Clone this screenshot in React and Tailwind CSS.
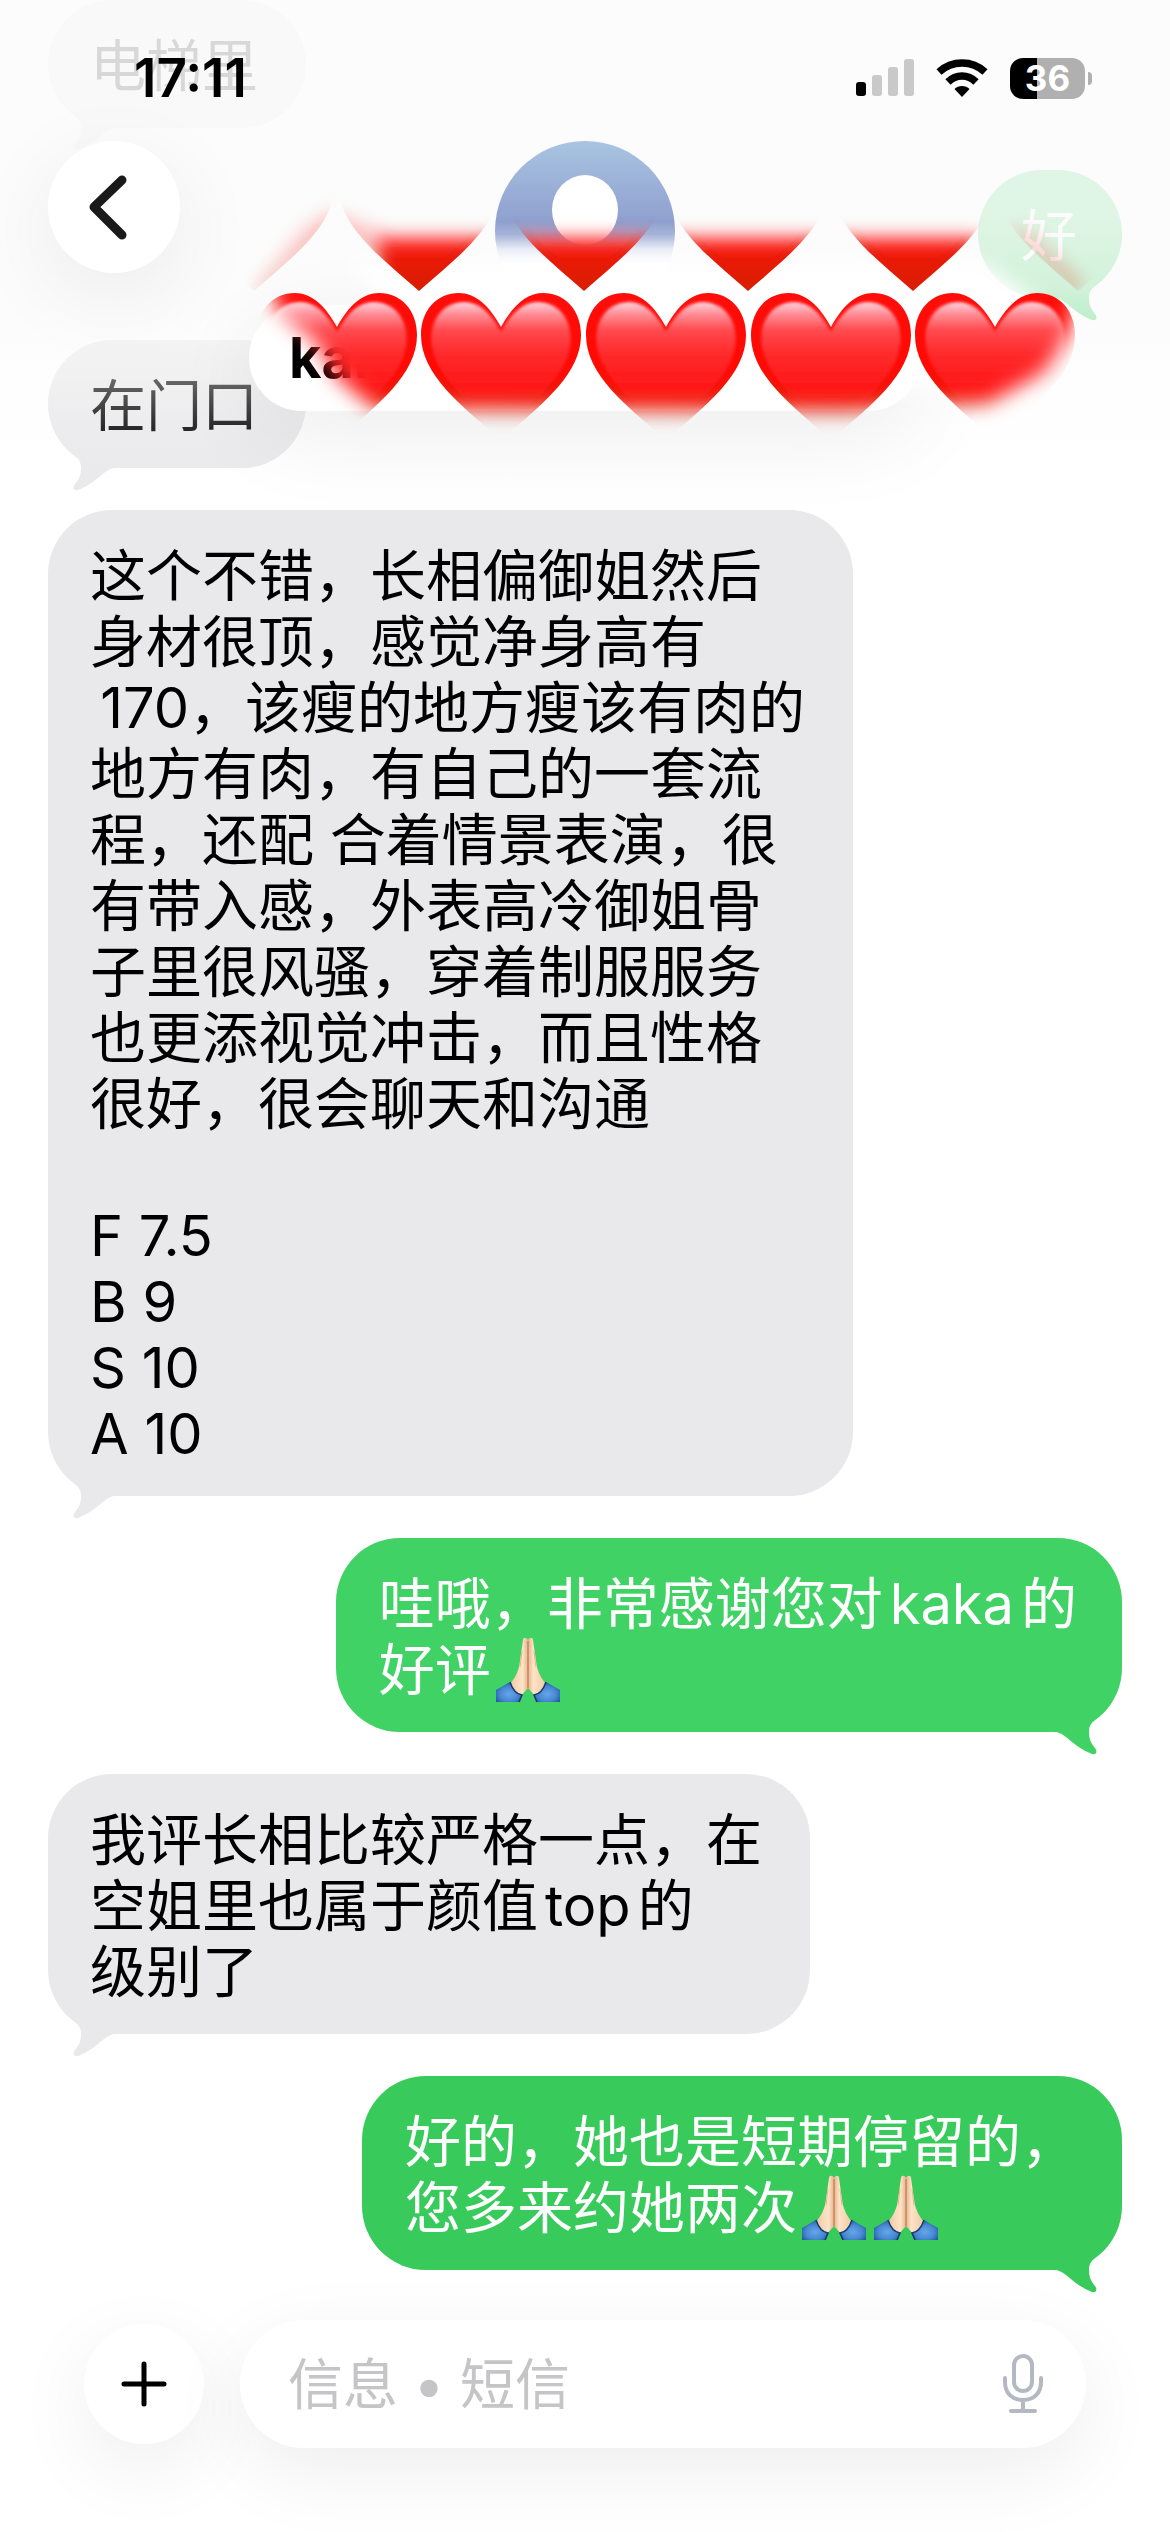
import React, { useState } from 'react';

const HEART_PATH =
  'M0 34 C-12 12 -26 0 -42 0 C-64 0 -80 17 -80 42 C-80 82 -40 112 0 147 C40 112 80 82 80 42 C80 17 64 0 42 0 C26 0 12 12 0 34 Z';

const messages = [
  { id: 1, from: 'them', lines: ['电梯里'] },
  { id: 2, from: 'me', tone: 'bg-[#41d366] text-[#41d366]', lines: ['好'] },
  { id: 3, from: 'them', lines: ['在门口'] },
  {
    id: 4,
    from: 'them',
    lines: [
      '这个不错，长相偏御姐然后',
      '身材很顶，感觉净身高有',
      '\u2009170，该瘦的地方瘦该有肉的',
      '地方有肉，有自己的一套流',
      '程，还配 合着情景表演，很',
      '有带入感，外表高冷御姐骨',
      '子里很风骚，穿着制服服务',
      '也更添视觉冲击，而且性格',
      '很好，很会聊天和沟通',
      '',
      'F 7.5',
      'B 9',
      'S 10',
      'A 10',
    ],
  },
  {
    id: 5,
    from: 'me',
    tone: 'bg-[#40d265] text-[#40d265]',
    lines: ['哇哦，非常感谢您对kaka的', '好评'],
    prayers: 1,
  },
  {
    id: 6,
    from: 'them',
    lines: ['我评长相比较严格一点，在', '空姐里也属于颜值top的', '级别了'],
  },
  {
    id: 7,
    from: 'me',
    tone: 'bg-[#38cb5c] text-[#38cb5c]',
    lines: ['好的，她也是短期停留的，', '您多来约她两次'],
    prayers: 2,
  },
];

const PrayEmoji = () => (
  <svg role="img" aria-label="🙏🏻" viewBox="0 0 66 66" className="ml-1 mr-0.5 inline-block h-[66px] w-[66px] align-top">
    <defs>
      <linearGradient id="skin" x1="0" x2="1" y1="0" y2="0">
        <stop offset="0" stopColor="#f3c9a0" />
        <stop offset="0.35" stopColor="#fde3c8" />
        <stop offset="0.5" stopColor="#e8b48c" />
        <stop offset="0.65" stopColor="#fde3c8" />
        <stop offset="1" stopColor="#f3c9a0" />
      </linearGradient>
      <radialGradient id="sleeve" cx="0.5" cy="0.6" r="0.6">
        <stop offset="0" stopColor="#66a6ea" />
        <stop offset="0.6" stopColor="#4788d2" />
        <stop offset="1" stopColor="#235a9f" />
      </radialGradient>
    </defs>
    <path d="M33 3 C32 0 28 0 28 3 L25 24 C24 34 20 41 15 47 L16 55 L24 61 L33 51 L42 61 L50 55 L51 47 C46 41 42 34 41 24 L38 3 C38 0 34 0 33 3 Z" fill="url(#skin)" />
    <path d="M33 4 L33 51" stroke="#bb7b53" strokeWidth="1.2" />
    <path d="M27 14 L25 30 M39 14 L41 30" stroke="#e7b68d" strokeWidth="1" fill="none" />
    <path d="M1 53 L15 45 C17 51 20 57 27 58 L25 65 L1 65 Z" fill="url(#sleeve)" />
    <path d="M65 53 L51 45 C49 51 46 57 39 58 L41 65 L65 65 Z" fill="url(#sleeve)" />
    <path d="M15 45 C17 51 20 57 27 58 L24 65 M51 45 C49 51 46 57 39 58 L42 65" stroke="#143a70" strokeWidth="1.5" fill="none" />
  </svg>
);

const Tail = ({ mine }) => (
  <svg
    aria-hidden="true"
    viewBox="0 0 80 50"
    className={
      mine
        ? 'absolute -bottom-[24px] right-0 h-[50px] w-[80px] -scale-x-100'
        : 'absolute -bottom-[24px] left-0 h-[50px] w-[80px]'
    }
  >
    <path d="M16 4 C24 12 33 16 33 25 C33 34 31 37 27 42 C24 46 26 49 30 48 C40 44 48 38 56 31 C60 28 63 26 68 26 L76 26 L60 4 Z" fill="currentColor" />
  </svg>
);

const Bubble = ({ message }) => {
  const mine = message.from === 'me';
  return (
    <li
      className={`relative w-fit rounded-[64px] pb-[29px] pt-[33px] ${
        mine ? `self-end pl-[43px] pr-[45px] ${message.tone}` : 'self-start bg-[#e9e9eb] pl-[42px] pr-[48px] text-[#e9e9eb]'
      }`}
    >
      <Tail mine={mine} />
      <p className={`relative whitespace-pre text-[56px] leading-[66px] [text-autospace:normal] ${mine ? 'text-white' : 'text-black'}`}>
        {message.lines.join('\n')}
        {Array.from({ length: message.prayers || 0 }, (_, i) => (
          <PrayEmoji key={i} />
        ))}
      </p>
    </li>
  );
};

const StatusBar = () => (
  <div className="flex h-[141px] items-center justify-between pl-[134px] pr-[78px] pt-[15px]">
    <time className="text-[53px] font-semibold leading-[60px] text-black">17:11</time>
    <div className="flex items-center gap-[22px]">
      <svg aria-label="signal" viewBox="0 0 58 38" className="h-[38px] w-[58px]">
        <rect x="0" y="23" width="10" height="14" rx="3" fill="#000" />
        <rect x="16" y="16" width="10" height="21" rx="3" fill="#c9c9c9" />
        <rect x="32" y="8" width="10" height="29" rx="3" fill="#c9c9c9" />
        <rect x="48" y="0" width="10" height="37" rx="3" fill="#c9c9c9" />
      </svg>
      <svg aria-label="wifi" viewBox="0 0 52 38" className="h-[38px] w-[52px]">
        <path d="M3 13 C16 1 36 1 49 13" fill="none" stroke="#000" strokeWidth="7.5" />
        <path d="M12 23 C20 15 32 15 40 23" fill="none" stroke="#000" strokeWidth="7.5" />
        <path d="M26 38 L18.5 30 C22 26 30 26 33.5 30 Z" fill="#000" />
      </svg>
      <div className="flex items-center gap-[3px]">
        <div className="flex h-[41px] w-[75px] items-center justify-center rounded-[13px] bg-linear-to-r from-black from-36% to-[#b0b0b0] to-36% text-[35px] font-bold leading-[41px] text-white">
          36
        </div>
        <div className="h-[13px] w-[4px] rounded-r-full bg-[#b0b0b0]"></div>
      </div>
    </div>
  </div>
);

const Heart = ({ x, y }) => (
  <g transform={`translate(${x} ${y})`}>
    <path d={HEART_PATH} fill="url(#heartBody)" />
    <path d={HEART_PATH} fill="url(#heartShine)" transform="translate(0 9) scale(0.87)" filter="url(#soft)" />
  </g>
);

const HeartSticker = () => (
  <svg
    aria-hidden="true"
    viewBox="55 0 1060 460"
    className="pointer-events-none absolute left-1/2 top-0 h-[460px] w-[1060px] -translate-x-1/2"
  >
    <defs>
      <linearGradient id="heartBody" x1="0" x2="0" y1="0" y2="1">
        <stop offset="0" stopColor="#ff0d0a" />
        <stop offset="0.5" stopColor="#ff0a04" />
        <stop offset="0.7" stopColor="#f0180a" />
        <stop offset="1" stopColor="#d81e00" />
      </linearGradient>
      <linearGradient id="heartShine" x1="0" x2="0" y1="0" y2="1">
        <stop offset="0" stopColor="#ffd3de" />
        <stop offset="0.09" stopColor="#ff9098" />
        <stop offset="0.22" stopColor="#ff4a4e" />
        <stop offset="0.4" stopColor="#ff2a2c" />
        <stop offset="0.68" stopColor="#ff1616" stopOpacity="0.95" />
        <stop offset="0.85" stopColor="#f51a0c" stopOpacity="0" />
      </linearGradient>
      <filter id="soft" x="-10%" y="-10%" width="120%" height="120%">
        <feGaussianBlur stdDeviation="2" />
      </filter>
      <filter id="fade" x="-20%" y="-40%" width="140%" height="180%">
        <feGaussianBlur stdDeviation="10" />
      </filter>
      <filter id="edge" x="-20%" y="-40%" width="140%" height="180%">
        <feGaussianBlur stdDeviation="9" />
      </filter>
      <mask id="topRow" maskUnits="userSpaceOnUse" x="200" y="150" width="950" height="200">
        <path d="M378 238 H980 V320 H378 Z" fill="#fff" filter="url(#edge)" />
        <path d="M330 212 L385 232 L385 262 L340 245 L262 294 L252 292 L305 228 Z" fill="#fff" opacity="0.24" filter="url(#edge)" />
        <path d="M1010 230 L1024 230 L1082 282 L1082 294 L1068 290 Z" fill="#fff" opacity="0.28" filter="url(#edge)" />
      </mask>
      <mask id="bottomRow" maskUnits="userSpaceOnUse" x="200" y="270" width="950" height="180">
        <path d="M262 270 H1085 L1068 335 L1044 372 L988 403 L850 411 L375 409 L338 378 L314 340 L282 315 Z" fill="#fff" filter="url(#fade)" />
      </mask>
    </defs>
    <path d="M350 262 H980 L1035 300 L1050 380 L900 390 H430 L400 320 Z" fill="#fff" filter="url(#fade)" />
    <g mask="url(#topRow)">
      {[254, 419, 584, 748, 913, 1078].map((x) => (
        <Heart key={x} x={x} y={144} />
      ))}
    </g>
    <g mask="url(#bottomRow)">
      {[337, 501, 666, 831, 995].map((x) => (
        <Heart key={x} x={x} y={293} />
      ))}
    </g>
  </svg>
);

const ChatHeader = () => (
  <header className="absolute inset-x-0 top-0 z-10">
    <div className="absolute inset-x-0 top-0 h-[510px] bg-[linear-gradient(to_bottom,rgba(252,252,252,0.86)_0%,rgba(251,251,251,0.85)_42%,rgba(251,251,251,0.78)_56%,rgba(251,251,251,0.6)_67%,rgba(252,252,252,0.42)_74%,rgba(252,252,252,0.16)_84%,rgba(255,255,255,0)_100%)]"></div>
    <div className="relative">
      <StatusBar />
      <div className="grid grid-cols-[1fr_auto_1fr] items-start px-12">
        <button
          type="button"
          aria-label="返回"
          className="flex h-[132px] w-[132px] items-center justify-center rounded-full bg-white shadow-[0_24px_90px_rgba(0,0,0,0.07)]"
        >
          <svg viewBox="0 0 132 132" className="h-[132px] w-[132px]">
            <path d="M74 39 L46 66 L74 94" fill="none" stroke="#1a1a1a" strokeWidth="9" strokeLinecap="round" strokeLinejoin="round" />
          </svg>
        </button>
        <div className="flex w-[672px] flex-col items-center">
          <svg viewBox="0 0 180 180" aria-hidden="true" className="h-[180px] w-[180px]">
            <defs>
              <linearGradient id="avatar" x1="0" x2="0" y1="0" y2="1">
                <stop offset="0" stopColor="#a9c4e1" />
                <stop offset="0.45" stopColor="#8fa0cf" />
                <stop offset="0.52" stopColor="#a7b4d9" />
                <stop offset="0.6" stopColor="#e6eaf5" />
                <stop offset="0.68" stopColor="#ffffff" />
              </linearGradient>
            </defs>
            <circle cx="90" cy="90" r="90" fill="url(#avatar)" />
            <ellipse cx="90" cy="69" rx="33" ry="35" fill="#fff" />
          </svg>
          <div className="-mt-4 h-[106px] w-full rounded-full bg-white px-[40px] shadow-[0_24px_90px_rgba(0,0,0,0.07)]">
            <h1 className="w-fit bg-linear-to-r from-black from-40% to-transparent to-85% bg-clip-text text-[56px] font-bold leading-[106px] text-transparent">
              kaka
            </h1>
          </div>
        </div>
      </div>
    </div>
    <HeartSticker />
  </header>
);

const Composer = () => {
  const [text, setText] = useState('');

  return (
    <form
      onSubmit={(e) => e.preventDefault()}
      className="flex items-center gap-9 px-[84px] pb-[84px] pt-[49px]"
    >
      <button
        type="button"
        aria-label="添加"
        className="flex h-[120px] w-[120px] shrink-0 items-center justify-center rounded-full bg-white shadow-[0_24px_80px_rgba(0,0,0,0.07)]"
      >
        <svg viewBox="0 0 46 46" className="h-[46px] w-[46px]">
          <path d="M23 3 V43 M3 23 H43" stroke="#000" strokeWidth="5" strokeLinecap="round" />
        </svg>
      </button>
      <div className="flex h-32 min-w-0 flex-1 items-center rounded-full bg-white pl-12 pr-[42px] shadow-[0_24px_80px_rgba(0,0,0,0.07)]">
        <input
          type="text"
          aria-label="信息"
          placeholder="信息 • 短信"
          value={text}
          onChange={(e) => setText(e.target.value)}
          className="h-20 min-w-0 flex-1 bg-transparent text-[55px] text-black outline-none placeholder:text-[#c5c5c7]"
        />
        <button type="button" aria-label="语音输入" className="shrink-0">
          <svg viewBox="0 0 42 60" className="h-[60px] w-[42px]" fill="none" stroke="#b3b8c2" strokeWidth="4" strokeLinecap="round">
            <rect x="12" y="2" width="18" height="35" rx="9" />
            <path d="M3 24 V28 C3 39 10 46 21 46 C32 46 39 39 39 28 V24 M21 46 V57 M9 57 H33" />
          </svg>
        </button>
      </div>
    </form>
  );
};

const App = () => {
  return (
    <div lang="zh-CN" className="relative flex min-h-screen flex-col overflow-hidden bg-white font-['Inter','Noto_Sans_CJK_SC',sans-serif]">
      <ChatHeader />
      <main className="flex-1 px-12">
        <ul className="flex flex-col gap-[42px]">
          {messages.map((message) => (
            <Bubble key={message.id} message={message} />
          ))}
        </ul>
      </main>
      <Composer />
    </div>
  );
};

export default App;
